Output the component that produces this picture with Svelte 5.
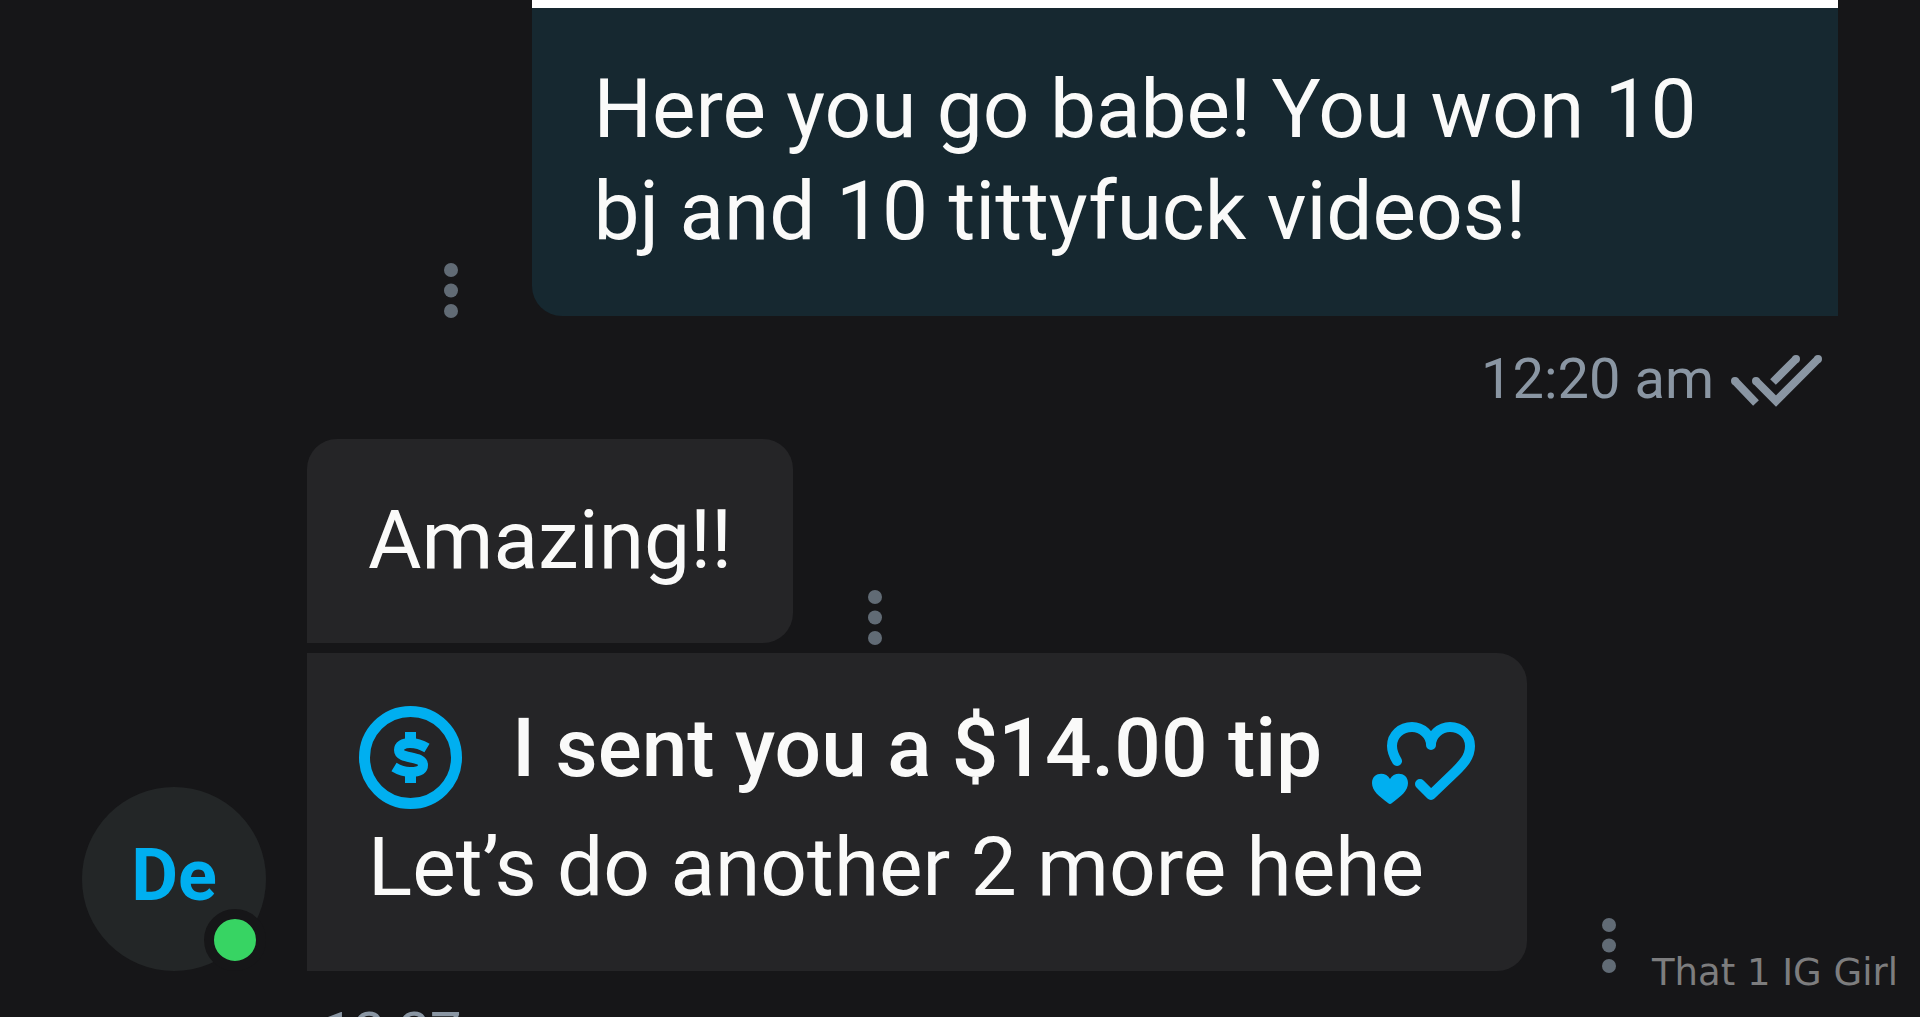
<script lang="ts">
  type Message = { id: number; text: string; tip?: string };

  const contact = { initials: 'De', online: true };
  const sent = {
    text: 'Here you go babe! You won 10 bj and 10 tittyfuck videos!',
    time: '12:20 am',
  };
  const received: Message[] = [
    { id: 1, text: 'Amazing!!' },
    { id: 2, text: 'Let’s do another 2 more hehe', tip: '$14.00' },
  ];
  const receivedTime = '12:27';
  const watermark = 'That 1 IG Girl';
</script>

{#snippet menu()}
  <button class="menu" aria-label="Message options">
    <svg viewBox="0 0 14 55" aria-hidden="true">
      <circle cx="7" cy="7" r="7" />
      <circle cx="7" cy="27.500" r="7" />
      <circle cx="7" cy="48" r="7" />
    </svg>
  </button>
{/snippet}

<main class="chat">
  <section class="outgoing">
    <div class="row">
      {@render menu()}
      <div class="bubble sent">
        <div class="media"></div>
        <p>{sent.text}</p>
      </div>
    </div>
    <div class="status">
      <time>{sent.time}</time>
      <svg class="checks" viewBox="0 0 92 54" role="img" aria-label="Read">
        <path d="M3 29 24 51M64 7 41 30M24 29 44 49 86 7" />
        <path class="caps" d="M3 29h0M64 7h0M24 29h0M86 7h0" />
      </svg>
    </div>
  </section>

  <section class="incoming">
    <div class="avatar">
      {contact.initials}
      {#if contact.online}
        <span class="online"></span>
      {/if}
    </div>
    <div class="messages">
      {#each received as message (message.id)}
        <div class="row">
          <div class="bubble" class:tipped={message.tip}>
            {#if message.tip}
              <div class="tip">
                <svg viewBox="0 0 103 103" aria-hidden="true">
                  <circle class="line coin" cx="51.500" cy="51.500" r="46" />
                  <path
                    class="line dollar"
                    d="M68 42c-5-3-11-5-17-5-7 0-11 3-11 7 0 10 24 5 24 15 0 5-5 7-13 7-6 0-11-2-16-5"
                  />
                  <path class="solid" d="M46 26h11v10H46zM46 67h11v10H46z" />
                </svg>
                <strong>I sent you a {message.tip} tip</strong>
                <svg viewBox="0 -16 103 103" aria-hidden="true">
                  <path
                    class="line heart"
                    d="M25 39C22 34 20 30 20 24 20 13 29 5 40 5c10 0 19 8 19 18C59 13 68 5 78 5c11 0 20 8 20 19 0 11-7 18-15 26L59 73 48 62"
                  />
                  <path
                    class="solid"
                    d="M18 57c-4-8-18-7-18 4 0 8 7 13 16 20q2 2 4 0c9-7 16-12 16-20 0-11-14-12-18-4z"
                  />
                </svg>
              </div>
            {/if}
            <p>{message.text}</p>
          </div>
          {@render menu()}
        </div>
      {/each}
    </div>
  </section>
  <time class="received-time">{receivedTime}</time>

  <div class="watermark">{watermark}</div>
</main>

<style>
  :global(body) {
    margin: 0;
    background: #161618;
  }

  .chat {
    position: relative;
    height: 100vh;
    overflow: hidden;
    box-sizing: border-box;
    padding: 0 82px;
    background: #161618;
    color: #fafaf9;
    font-family: Roboto, 'Liberation Sans', sans-serif;
    font-size: 82px;
    line-height: 102px;
  }

  p {
    margin: 0;
  }

  .row {
    display: flex;
    align-items: flex-end;
  }

  .outgoing .row {
    justify-content: flex-end;
    gap: 74px;
  }

  .bubble {
    padding: 50px 61px 52px;
    background: #252527;
    border-radius: 30px 30px 30px 0;
  }

  .bubble.tipped {
    padding: 44px 52px 53px;
    border-radius: 0 30px 30px 0;
  }

  .bubble.sent {
    width: 68vw;
    padding: 0;
    background: #162830;
    border-radius: 0 0 0 30px;
  }

  .media {
    height: 8px;
    background: #fff;
  }

  .sent p {
    padding: 50px 61px 54px;
  }

  .menu {
    flex: none;
    width: 14px;
    margin-bottom: -2px;
    padding: 0;
    border: 0;
    background: none;
    cursor: pointer;
  }

  .menu svg {
    display: block;
    fill: #616b75;
  }

  .status {
    display: flex;
    justify-content: flex-end;
    align-items: center;
    gap: 18px;
    padding: 28px 14px 25px 0;
    color: #8a96a3;
    font-size: 56px;
    line-height: 70px;
  }

  .checks {
    width: 92px;
    height: 54px;
    overflow: visible;
    fill: none;
    stroke: #8a96a3;
    stroke-width: 8;
  }

  .caps {
    stroke-linecap: round;
  }

  .incoming {
    display: flex;
    align-items: flex-end;
    gap: 41px;
  }

  .avatar {
    position: relative;
    flex: none;
    width: 184px;
    height: 184px;
    border-radius: 50%;
    background: #232627;
    color: #00aff0;
    font-size: 72px;
    font-weight: 700;
    line-height: 178px;
    text-align: center;
  }

  .online {
    position: absolute;
    right: 0;
    bottom: 0;
    width: 42px;
    height: 42px;
    border: 10px solid #161618;
    border-radius: 50%;
    background: #37d463;
  }

  .messages {
    display: flex;
    flex-direction: column;
    gap: 10px;
  }

  .messages .row {
    gap: 75px;
  }

  .tip {
    display: flex;
    align-items: flex-start;
    gap: 50px;
    margin-bottom: 7px;
  }

  .tip strong {
    font-weight: 500;
  }

  .tip svg {
    width: 103px;
    height: 103px;
    margin-top: 9px;
  }

  .tipped p {
    padding-left: 9px;
  }

  .line {
    fill: none;
    stroke: #00aff0;
    stroke-width: 10;
  }

  .coin {
    stroke-width: 11;
  }

  .heart {
    stroke-linecap: round;
    stroke-linejoin: round;
  }

  .solid {
    fill: #00aff0;
  }

  .received-time {
    display: block;
    padding: 27px 0 0 240px;
    color: #8a96a3;
    font-size: 56px;
    line-height: 70px;
  }

  .watermark {
    position: absolute;
    right: 22px;
    bottom: 22px;
    color: #7d7d7e;
    font-family: 'DejaVu Sans', sans-serif;
    font-size: 37px;
    line-height: 44px;
  }
</style>
